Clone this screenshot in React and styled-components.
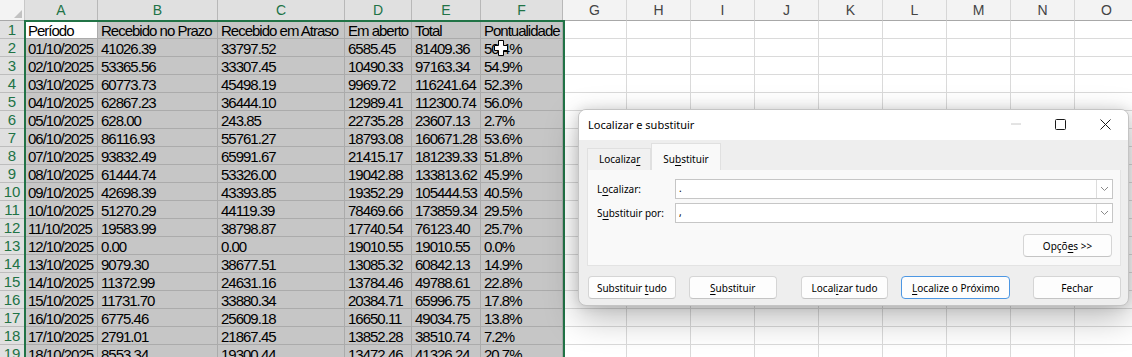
import React from "react";
import styled, { createGlobalStyle } from "styled-components";

const GlobalStyle = createGlobalStyle`
  html, body { margin: 0; padding: 0; background: #fff; overflow: hidden; }
  body { font-family: "Liberation Sans", Arial, sans-serif; }
`;

const COLS = [73, 120, 127, 67, 69, 82, 64, 64, 64, 64, 64, 64, 64, 64, 64];
const LETTERS = "ABCDEFGHIJKLMNO".split("");
const SEL_COLS = 6;
const GREEN = "#217346";

const DATA = [
  ["Período", "Recebido no Prazo", "Recebido em Atraso", "Em aberto", "Total", "Pontualidade"],
  ["01/10/2025", "41026.39", "33797.52", "6585.45", "81409.36", "50.4%"],
  ["02/10/2025", "53365.56", "33307.45", "10490.33", "97163.34", "54.9%"],
  ["03/10/2025", "60773.73", "45498.19", "9969.72", "116241.64", "52.3%"],
  ["04/10/2025", "62867.23", "36444.10", "12989.41", "112300.74", "56.0%"],
  ["05/10/2025", "628.00", "243.85", "22735.28", "23607.13", "2.7%"],
  ["06/10/2025", "86116.93", "55761.27", "18793.08", "160671.28", "53.6%"],
  ["07/10/2025", "93832.49", "65991.67", "21415.17", "181239.33", "51.8%"],
  ["08/10/2025", "61444.74", "53326.00", "19042.88", "133813.62", "45.9%"],
  ["09/10/2025", "42698.39", "43393.85", "19352.29", "105444.53", "40.5%"],
  ["10/10/2025", "51270.29", "44119.39", "78469.66", "173859.34", "29.5%"],
  ["11/10/2025", "19583.99", "38798.87", "17740.54", "76123.40", "25.7%"],
  ["12/10/2025", "0.00", "0.00", "19010.55", "19010.55", "0.0%"],
  ["13/10/2025", "9079.30", "38677.51", "13085.32", "60842.13", "14.9%"],
  ["14/10/2025", "11372.99", "24631.16", "13784.46", "49788.61", "22.8%"],
  ["15/10/2025", "11731.70", "33880.34", "20384.71", "65996.75", "17.8%"],
  ["16/10/2025", "6775.46", "25609.18", "16650.11", "49034.75", "13.8%"],
  ["17/10/2025", "2791.01", "21867.45", "13852.28", "38510.74", "7.2%"],
  ["18/10/2025", "8553.34", "19300.44", "13472.46", "41326.24", "20.7%"],
];

/* ---------- sheet ---------- */

const Sheet = styled.div`
  position: relative;
  width: 1132px;
  height: 357px;
  overflow: hidden;
  background: #fff;
`;

const Grid = styled.div`
  display: grid;
  grid-template-columns: 25px ${COLS.map((w) => w + "px").join(" ")};
  grid-template-rows: 21px repeat(${DATA.length}, 18px);
  width: max-content;
`;

const Corner = styled.div`
  position: relative;
  box-sizing: border-box;
  background: #f3f3f3;
  border-right: 1px solid #c8c8c8;
  border-bottom: 1px solid #a8a8a8;
  &::after {
    content: "";
    position: absolute;
    right: 2px;
    bottom: 2px;
    width: 0;
    height: 0;
    border-style: solid;
    border-width: 0 0 8px 8px;
    border-color: transparent transparent #c2c2c2 transparent;
  }
`;

const ColHead = styled.div`
  box-sizing: border-box;
  background: ${(p) => (p.$sel ? "#e0e0e0" : "#f3f3f3")};
  color: ${(p) => (p.$sel ? GREEN : "#444")};
  border-right: 1px solid ${(p) => (p.$sel ? "#b8b8b8" : "#d6d6d6")};
  border-bottom: 1px solid #a8a8a8;
  font-size: 14px;
  line-height: 21px;
  text-align: center;
`;

const RowHead = styled.div`
  box-sizing: border-box;
  background: #e0e0e0;
  color: ${GREEN};
  border-right: 1px solid #a8a8a8;
  border-bottom: 1px solid #bdbdbd;
  font-size: 15px;
  line-height: 18px;
  text-align: center;
`;

const Cell = styled.div`
  box-sizing: border-box;
  background: ${(p) => (p.$active ? "#fff" : p.$sel ? "#c6c6c6" : "#fff")};
  border-right: 1px solid ${(p) => (p.$sel ? "#ababab" : "#dadada")};
  border-bottom: 1px solid ${(p) => (p.$sel ? "#ababab" : "#dadada")};
  padding-left: 3px;
  font-size: 15px;
  letter-spacing: -1px;
  line-height: 19px;
  color: #000;
  white-space: nowrap;
  overflow: hidden;
`;

const SelectionFrame = styled.div`
  position: absolute;
  left: 24px;
  top: 20px;
  width: 541px;
  height: 400px;
  box-sizing: border-box;
  border: 2px solid ${GREEN};
  pointer-events: none;
`;

const CursorMark = styled.svg`
  position: absolute;
  left: 494px;
  top: 40px;
`;

/* ---------- dialog ---------- */

const Dialog = styled.div`
  position: absolute;
  left: 578px;
  top: 109px;
  width: 551px;
  height: 197px;
  box-sizing: border-box;
  border: 1px solid #c4c4c4;
  border-radius: 8px;
  background: #eeeeee;
  overflow: hidden;
  box-shadow: 0 12px 34px rgba(0, 0, 0, 0.28), 0 0 12px rgba(0, 0, 0, 0.12);
  font-family: "Noto Sans", "Open Sans", sans-serif;
  color: #000;
  display: flex;
  flex-direction: column;
`;

const TitleBar = styled.div`
  height: 30px;
  flex: none;
  background: #fff;
  display: flex;
  align-items: center;
  padding-left: 9px;
`;

const Title = styled.div`
  flex: 1;
  font-size: 11px;
  margin-top: -2px;
`;

const WinBtn = styled.div`
  width: 45px;
  height: 30px;
  display: flex;
  align-items: center;
  justify-content: center;
  margin-top: -2px;
`;

const Body = styled.div`
  flex: 1;
  display: flex;
  flex-direction: column;
  padding: 3px 7px 0 8px;
`;

const Tabs = styled.div`
  display: flex;
  align-items: flex-end;
  height: 27px;
`;

const Tab = styled.div`
  box-sizing: border-box;
  height: ${(p) => (p.$active ? 27 : 22)}px;
  background: ${(p) => (p.$active ? "#f9f9f9" : "#f1f1f1")};
  border: 1px solid #e0e0e0;
  border-bottom: none;
  padding: 0 ${(p) => (p.$active ? 11 : 10)}px 4px 11px;
  font-size: 10px;
  display: flex;
  align-items: flex-end;
  line-height: 14px;
`;

const Panel = styled.div`
  box-sizing: border-box;
  height: 96px;
  background: #f9f9f9;
  border: 1px solid #e3e3e3;
  border-top: none;
  padding: 9px 7px 0 9px;
  display: flex;
  flex-direction: column;
`;

const FieldRow = styled.div`
  display: flex;
  align-items: center;
  height: 20px;
  margin-bottom: 4px;
`;

const Label = styled.div`
  width: 78px;
  font-size: 10px;
`;

const Combo = styled.div`
  flex: 1;
  height: 20px;
  box-sizing: border-box;
  display: flex;
  background: #fff;
  border: 1px solid #c6c6c6;
`;

const ComboText = styled.div`
  flex: 1;
  padding-left: 3px;
  font-size: 10px;
  line-height: 17px;
`;

const ComboArrow = styled.div`
  width: 15px;
  border-left: 1px solid #dcdcdc;
  display: flex;
  align-items: center;
  justify-content: center;
`;

const OptionsRow = styled.div`
  display: flex;
  justify-content: flex-end;
  margin-top: 7px;
  padding-right: 1px;
`;

const ButtonRow = styled.div`
  display: flex;
  gap: 13px;
  margin-top: 10px;
  padding-left: 1px;
`;

const Button = styled.div`
  box-sizing: border-box;
  width: ${(p) => p.$w || 88}px;
  height: 23px;
  margin-left: ${(p) => p.$gapBefore || 0}px;
  background: #fdfdfd;
  border: 1px solid ${(p) => (p.$primary ? "#4d97e3" : "#d5d5d5")};
  border-bottom-color: ${(p) => (p.$primary ? "#4d97e3" : "#c4c4c4")};
  border-radius: 4px;
  font-size: 10px;
  display: flex;
  align-items: center;
  justify-content: center;
  white-space: nowrap;
`;

const ButtonText = styled.span`
  white-space: pre;
`;

const Key = styled.span`
  text-decoration: underline;
  text-underline-offset: 2px;
`;

const Chevron = () => (
  <svg width="9" height="6" viewBox="0 0 9 6">
    <path d="M1 1 L4.5 4.5 L8 1" fill="none" stroke="#8a8a8a" strokeWidth="1" />
  </svg>
);

export default function App() {
  return (
    <>
      <GlobalStyle />
      <Sheet>
        <Grid>
          <Corner />
          {LETTERS.map((l, i) => (
            <ColHead key={l} $sel={i < SEL_COLS}>
              {l}
            </ColHead>
          ))}
          {DATA.map((row, r) => (
            <React.Fragment key={r}>
              <RowHead>{r + 1}</RowHead>
              {LETTERS.map((l, c) => (
                <Cell key={l} $sel={c < SEL_COLS} $active={r === 0 && c === 0}>
                  {row[c] || ""}
                </Cell>
              ))}
            </React.Fragment>
          ))}
        </Grid>
        <SelectionFrame />
        <CursorMark width="14" height="16" viewBox="0 0 14 16">
          <path
            d="M4.5 0.5 H9.5 V5.5 H13.5 V10.5 H9.5 V15.5 H4.5 V10.5 H0.5 V5.5 H4.5 Z"
            fill="#fff"
            stroke="#000"
            strokeWidth="1"
          />
        </CursorMark>

        <Dialog>
          <TitleBar>
            <Title>Localizar e substituir</Title>
            <WinBtn>
              <svg width="10" height="2" viewBox="0 0 10 2">
                <path d="M0 1 H10" stroke="#c8c8c8" strokeWidth="1" />
              </svg>
            </WinBtn>
            <WinBtn>
              <svg width="11" height="11" viewBox="0 0 11 11">
                <rect x="0.5" y="0.5" width="10" height="10" rx="1" fill="none" stroke="#1a1a1a" strokeWidth="1" />
              </svg>
            </WinBtn>
            <WinBtn>
              <svg width="11" height="11" viewBox="0 0 11 11">
                <path d="M0.5 0.5 L10.5 10.5 M10.5 0.5 L0.5 10.5" stroke="#1a1a1a" strokeWidth="1" />
              </svg>
            </WinBtn>
          </TitleBar>
          <Body>
            <Tabs>
              <Tab>
                <ButtonText>
                  Localiza<Key>r</Key>
                </ButtonText>
              </Tab>
              <Tab $active>
                <ButtonText>
                  Su<Key>b</Key>stituir
                </ButtonText>
              </Tab>
            </Tabs>
            <Panel>
              <FieldRow>
                <Label>
                  L<Key>o</Key>calizar:
                </Label>
                <Combo>
                  <ComboText>.</ComboText>
                  <ComboArrow>
                    <Chevron />
                  </ComboArrow>
                </Combo>
              </FieldRow>
              <FieldRow>
                <Label>
                  S<Key>u</Key>bstituir por:
                </Label>
                <Combo>
                  <ComboText>,</ComboText>
                  <ComboArrow>
                    <Chevron />
                  </ComboArrow>
                </Combo>
              </FieldRow>
              <OptionsRow>
                <Button $w={89}>
                  <ButtonText>
                    Opçõ<Key>e</Key>s &gt;&gt;
                  </ButtonText>
                </Button>
              </OptionsRow>
            </Panel>
            <ButtonRow>
              <Button>
                <ButtonText>
                  Substituir <Key>t</Key>udo
                </ButtonText>
              </Button>
              <Button>
                <ButtonText>
                  <Key>S</Key>ubstituir
                </ButtonText>
              </Button>
              <Button $gapBefore={11}>
                <ButtonText>
                  Local<Key>i</Key>zar tudo
                </ButtonText>
              </Button>
              <Button $w={109} $primary>
                <ButtonText>
                  <Key>L</Key>ocalize o Próximo
                </ButtonText>
              </Button>
              <Button $gapBefore={10}>
                <ButtonText>Fechar</ButtonText>
              </Button>
            </ButtonRow>
          </Body>
        </Dialog>
      </Sheet>
    </>
  );
}
